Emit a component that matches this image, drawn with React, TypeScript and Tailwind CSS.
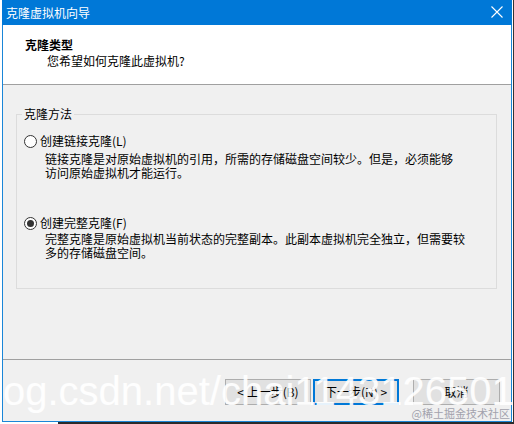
import React from "react";

const cjk = { fontFamily: '"Noto Sans CJK SC", "Noto Sans", sans-serif' };

const Radio = ({ checked }: { checked?: boolean }) => (
  <span className="flex h-[13px] w-[13px] shrink-0 items-center justify-center rounded-full border border-[#333333] bg-white">
    {checked && <span className="h-[7px] w-[7px] rounded-full bg-[#333333]" />}
  </span>
);

const App = () => {
  return (
    <div className="relative h-[424px] w-[514px] overflow-hidden bg-white text-[12px] text-black" style={cjk}>
      <div className="flex h-[422px]">
        <div className="ml-[2px] flex w-[510px] flex-col">
          {/* title bar */}
          <div className="flex h-[25px] shrink-0 items-center justify-between bg-[#0078d7] pl-[4px] pr-[9px] text-white">
            <span className="leading-none">克隆虚拟机向导</span>
            <svg width="12" height="12" viewBox="0 0 12 12" className="mb-[1px]">
              <path d="M0.5 0.5 L11.5 11.5 M11.5 0.5 L0.5 11.5" stroke="white" strokeWidth="1.1" />
            </svg>
          </div>
          <div className="flex flex-1 flex-col border-x border-b border-[#1a86d8]">
            {/* header */}
            <div className="h-[59px] shrink-0 bg-white pl-[22px] pt-[12px]">
              <div className="font-bold leading-[16px]">克隆类型</div>
              <div className="pl-[22px] leading-[16px]">您希望如何克隆此虚拟机?</div>
            </div>
            <div className="h-px shrink-0 bg-[#a0a0a0]" />
            {/* body */}
            <div className="h-[274px] shrink-0 bg-[#f0f0f0] pl-[13px] pr-[14px] pt-[22px]">
              <fieldset className="h-[182px] border border-[#dcdcdc] pl-[7px]">
                <legend className="ml-[-2px] px-[2px] leading-[14px]">克隆方法</legend>
                <div className="mt-[12px] flex h-[16px] items-center gap-[3px]">
                  <Radio />
                  <span className="leading-[16px]">创建链接克隆(L)</span>
                </div>
                <div className="mt-[3px] pl-[21px] leading-[13.5px]">
                  链接克隆是对原始虚拟机的引用，所需的存储磁盘空间较少。但是，必须能够
                  <br />
                  访问原始虚拟机才能运行。
                </div>
                <div className="mt-[36px] flex h-[16px] items-center gap-[3px]">
                  <Radio checked />
                  <span className="leading-[16px]">创建完整克隆(F)</span>
                </div>
                <div className="mt-[1px] pl-[21px] leading-[13.5px]">
                  完整克隆是原始虚拟机当前状态的完整副本。此副本虚拟机完全独立，但需要较
                  <br />
                  多的存储磁盘空间。
                </div>
              </fieldset>
            </div>
            <div className="h-px shrink-0 bg-[#a0a0a0]" />
            {/* footer */}
            <div className="flex flex-1 items-start justify-end bg-[#f0f0f0] pr-[11px] pt-[19px]">
              <button type="button" className="flex h-[26px] w-[86px] items-center justify-center border border-[#adadad] bg-[#e1e1e1]">
                &lt; 上一步(B)
              </button>
              <button type="button" className="ml-[2px] flex h-[26px] w-[86px] items-center justify-center border-2 border-[#0078d7] bg-[#e1e1e1]">
                下一步(N) &gt;
              </button>
              <button type="button" className="ml-[14px] flex h-[26px] w-[87px] items-center justify-center border border-[#adadad] bg-[#e1e1e1]">
                取消
              </button>
            </div>
          </div>
        </div>
        <div className="ml-[1px] flex-1 bg-[#333333]" />
      </div>
      <div className="flex h-[2px]">
        <div className="w-[58px] bg-white" />
        <div className="flex-1 bg-[#2a2a2a]" />
      </div>

      {/* watermarks */}
      <div
        className="pointer-events-none absolute left-[3px] top-[371px] whitespace-nowrap text-[40px] leading-none text-white/90"
        style={{ fontFamily: '"Liberation Sans", Arial, sans-serif' }}
      >
        og.csdn.net/chai1143126501
      </div>
      <div className="pointer-events-none absolute right-[4px] top-[407px] whitespace-nowrap text-[11px] leading-[13px] text-[#a2a2ad]">
        @稀土掘金技术社区
      </div>
    </div>
  );
};

export default App;
